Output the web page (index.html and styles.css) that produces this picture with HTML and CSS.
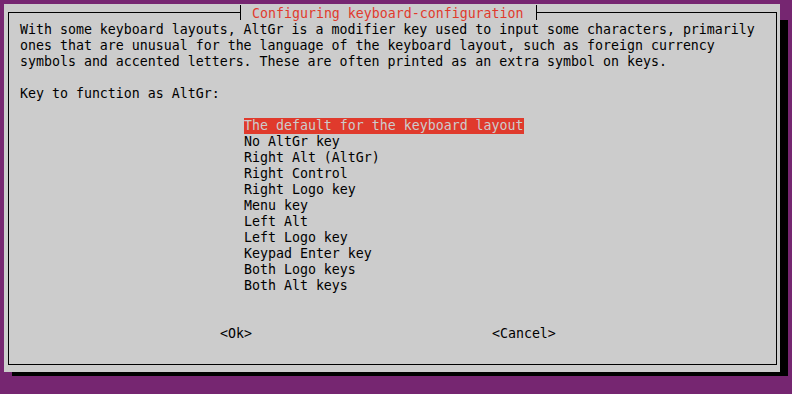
FILE: index.html
```html
<!DOCTYPE html>
<html lang="en">
<head>
<meta charset="utf-8">
<title>Configuring keyboard-configuration</title>
<link rel="stylesheet" href="styles.css">
</head>
<body>
<div class="screen">
  <div class="dialog">
    <div class="frame">
      <div class="title">Configuring keyboard-configuration</div>
      <div class="message">
        <div class="line">With some keyboard layouts, AltGr is a modifier key used to input some characters, primarily</div>
        <div class="line">ones that are unusual for the language of the keyboard layout, such as foreign currency</div>
        <div class="line">symbols and accented letters. These are often printed as an extra symbol on keys.</div>
      </div>
      <div class="prompt">Key to function as AltGr:</div>
      <ul class="list">
        <li class="item"><span class="selected">The default for the keyboard layout</span></li>
        <li class="item">No AltGr key</li>
        <li class="item">Right Alt (AltGr)</li>
        <li class="item">Right Control</li>
        <li class="item">Right Logo key</li>
        <li class="item">Menu key</li>
        <li class="item">Left Alt</li>
        <li class="item">Left Logo key</li>
        <li class="item">Keypad Enter key</li>
        <li class="item">Both Logo keys</li>
        <li class="item">Both Alt keys</li>
      </ul>
      <div class="buttons">
        <span class="button">&lt;Ok&gt;</span>
        <span class="button">&lt;Cancel&gt;</span>
      </div>
    </div>
  </div>
</div>
</body>
</html>
```
FILE: styles.css
```css
html, body {
  margin: 0;
  padding: 0;
  background: #762671;
  overflow: hidden;
}
.screen {
  padding: 4px;
  font-family: "DejaVu Sans Mono", "Liberation Mono", monospace;
  font-size: 13.288px;
  line-height: 16px;
  color: #000;
  white-space: nowrap;
}
.dialog {
  width: 776px;
  height: 368px;
  box-sizing: border-box;
  padding: 8px 3px 7px 4px;
  background: #cccccc;
  box-shadow: 8px 16px 0 #000;
}
.frame {
  position: relative;
  height: 100%;
  box-sizing: border-box;
  border: 1px solid #000;
  padding: 9px 0 0 11px;
}
.title {
  position: absolute;
  left: 231px;
  top: -8px;
  height: 14px;
  padding: 1px 12px 0 11px;
  border-left: 1px solid #000;
  border-right: 1px solid #000;
  background: #cccccc;
  color: #e03a2c;
}
.message {
  margin-bottom: 16px;
}
.prompt {
  margin-bottom: 16px;
}
.list {
  list-style: none;
  margin: 0 0 32px 224px;
  padding: 0;
}
.item {
  height: 16px;
}
.selected {
  display: inline-block;
  vertical-align: top;
  background: #e03a2c;
  color: #cccccc;
}
.buttons {
  display: flex;
  gap: 240px;
  padding-left: 200px;
}
```
